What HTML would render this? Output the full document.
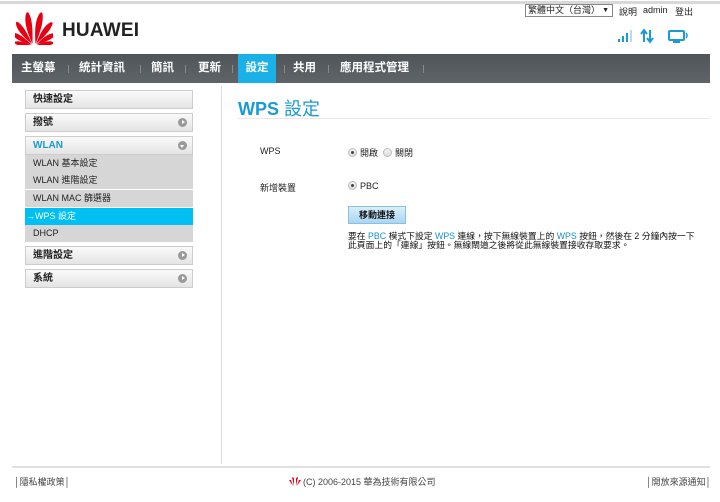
<!DOCTYPE html>
<html><head><meta charset="utf-8"><style>
*{margin:0;padding:0;box-sizing:border-box}
body{width:720px;height:502px;background:#fff;font-family:"Liberation Sans","Noto Sans CJK TC",sans-serif;position:relative;overflow:hidden;color:#333}
.topline{position:absolute;left:0;top:1px;width:720px;height:3px;background:#d8d8d8}
.logo{position:absolute;left:15px;top:11px}
.brand{position:absolute;left:62px;top:20px;font-size:19px;font-weight:bold;color:#222;letter-spacing:0.2px}
.lang{position:absolute;left:525px;top:4px;width:88px;height:13px;border:1px solid #888;font-size:9px;line-height:11px;padding-left:2px;color:#222;background:#fff}
.lang span{position:absolute;right:3px;top:0;font-size:7px}
.tl{position:absolute;top:5px;font-size:9px;color:#222}
.nav{position:absolute;left:12px;top:54px;width:698px;height:29px;background:linear-gradient(#4f5558,#5e6467);}
.nav a{position:absolute;top:0;height:29px;line-height:29px;color:#fff;font-size:11.5px;font-weight:bold}
.nav .sep{position:absolute;top:11px;width:1px;height:8px;background:#888}
.nav .act{background:#1ab0e8;width:38px;text-align:center}
.vdiv{position:absolute;left:221px;top:86px;width:1px;height:378px;background:#ddd}
.sb{position:absolute;left:25px;width:168px;height:19px;border:1px solid #ccc;background:linear-gradient(#fafafa,#e4e4e4);font-size:10px;font-weight:bold;line-height:17px;padding-left:7px;color:#222}
.sb i{position:absolute;right:5px;top:4px;width:9px;height:9px;border-radius:50%;background:#999}
.sb i:after{content:"";position:absolute;left:3.5px;top:2px;border-left:3px solid #fff;border-top:2.5px solid transparent;border-bottom:2.5px solid transparent}
.sb i.d:after{left:2px;top:3.5px;border-top:3px solid #fff;border-left:2.5px solid transparent;border-right:2.5px solid transparent;border-bottom:0}
.sub{position:absolute;left:25px;width:168px;height:17px;background:#d6d6d6;font-size:9px;line-height:17px;padding-left:8px;color:#222}
.title{position:absolute;left:238px;top:95px;font-size:18px;color:#1a9ad6;font-weight:bold}
.title span{font-weight:normal}
.hline{position:absolute;left:238px;top:118px;width:472px;height:1px;background:#e8e8e8}
.lbl{position:absolute;font-size:9px;color:#222}
.rad{display:inline-block;width:9px;height:9px;border:1px solid #bbb;border-radius:50%;background:linear-gradient(#f4f4f4,#ddd);vertical-align:-1px;position:relative;margin-right:3px}
.rad.on:after{content:"";position:absolute;left:2px;top:2px;width:3px;height:3px;border-radius:50%;background:#444}
.btn{position:absolute;left:348px;top:206px;width:58px;height:18px;border:1px solid #8bc0df;background:linear-gradient(#d8eefa,#a9d6f2);font-size:9px;font-weight:bold;text-align:center;line-height:16px;color:#111}
.desc{position:absolute;left:348px;top:232px;font-size:8.8px;line-height:9px;color:#111;white-space:nowrap}
.desc b{font-weight:normal;color:#1a8fd0}
.fline{position:absolute;left:12px;top:466px;width:698px;height:2px;background:#e0e0e0}
.ft{position:absolute;top:475px;font-size:9px;color:#444}
</style></head><body>
<div class="topline"></div>
<svg class="logo" width="38" height="34" viewBox="0 0 38 34">
<defs><path id="p" d="M0 0 C-2.5 -7 -4.5 -15 -1 -20 C0 -21 1 -21 1.5 -20 C4 -15 2 -7 0 0Z"/></defs>
<g fill="#e60012">
<use href="#p" transform="translate(17.5 33) rotate(-10) scale(1.1 1.55)"/>
<use href="#p" transform="translate(20.5 33) rotate(10) scale(1.1 1.55)"/>
<use href="#p" transform="translate(17 33) rotate(-36) scale(1 1.3)"/>
<use href="#p" transform="translate(21 33) rotate(36) scale(1 1.3)"/>
<use href="#p" transform="translate(16.5 33.5) rotate(-60) scale(0.9 1.05)"/>
<use href="#p" transform="translate(21.5 33.5) rotate(60) scale(0.9 1.05)"/>
<use href="#p" transform="translate(16 34) rotate(-82) scale(0.75 0.8)"/>
<use href="#p" transform="translate(22 34) rotate(82) scale(0.75 0.8)"/>
</g></svg>
<div class="brand">HUAWEI</div>
<div class="lang">繁體中文（台灣）<span>▼</span></div>
<div class="tl" style="left:619px">說明</div>
<div class="tl" style="left:643px">admin</div>
<div class="tl" style="left:675px">登出</div>
<svg style="position:absolute;left:618px;top:29px" width="75" height="15" viewBox="0 0 75 15">
<g fill="#1a9ad6"><rect x="0" y="10" width="2" height="3"/><rect x="4" y="7" width="2" height="6"/><rect x="8" y="4" width="2" height="9"/><rect x="12" y="1" width="2" height="12" fill="#b8d8ee"/></g>
<path d="M26 13V2 M23 5 L26 1 L29 5 M32 1V12 M29 9 L32 13 L35 9" stroke="#1a9ad6" stroke-width="2" fill="none"/>
<rect x="51" y="2" width="15" height="9" rx="1" fill="none" stroke="#1a9ad6" stroke-width="2"/>
<rect x="55" y="12" width="7" height="2" fill="#1a9ad6"/>
<path d="M68 4 Q70 6.5 68 9" stroke="#1a9ad6" stroke-width="1.5" fill="none"/>
</svg>
<div class="nav">
<a style="left:9px">主螢幕</a><div class="sep" style="left:56px"></div>
<a style="left:67px">統計資訊</a><div class="sep" style="left:128px"></div>
<a style="left:139px">簡訊</a><div class="sep" style="left:173px"></div>
<a style="left:186px">更新</a><div class="sep" style="left:220px"></div>
<a class="act" style="left:226px">設定</a><div class="sep" style="left:272px"></div>
<a style="left:281px">共用</a><div class="sep" style="left:316px"></div>
<a style="left:328px">應用程式管理</a><div class="sep" style="left:411px"></div>
</div>
<div class="vdiv"></div>
<div class="sb" style="top:90px">快速設定</div>
<div class="sb" style="top:113px">撥號<i></i></div>
<div class="sb" style="top:136px;color:#1a9ad6">WLAN<i class="d"></i></div>
<div class="sub" style="top:155px">WLAN 基本設定</div>
<div class="sub" style="top:172px">WLAN 進階設定</div>
<div class="sub" style="top:190px">WLAN MAC 篩選器</div>
<div class="sub" style="top:208px;background:#00bff3;color:#fff;padding-left:1px">→WPS 設定</div>
<div class="sub" style="top:225px;height:17px">DHCP</div>
<div class="sb" style="top:246px">進階設定<i></i></div>
<div class="sb" style="top:269px">系統<i></i></div>
<div class="title">WPS <span>設定</span></div>
<div class="hline"></div>
<div class="lbl" style="left:260px;top:146px">WPS</div>
<div class="lbl" style="left:348px;top:146px"><span class="rad on"></span>開啟 &nbsp;<span class="rad"></span>關閉</div>
<div class="lbl" style="left:260px;top:181px">新增裝置</div>
<div class="lbl" style="left:348px;top:181px"><span class="rad on"></span>PBC</div>
<div class="btn">移動連接</div>
<div class="desc">要在 <b>PBC</b> 模式下設定 <b>WPS</b> 連線，按下無線裝置上的 <b>WPS</b> 按鈕，然後在 2 分鐘內按一下<br>此頁面上的「連線」按鈕。無線閘道之後將從此無線裝置接收存取要求。</div>
<div class="fline"></div>
<div class="ft" style="left:14px">│隱私權政策│</div>
<svg style="position:absolute;left:289px;top:476px" width="12" height="10" viewBox="0 0 12 10"><g fill="#e60012"><path d="M5 10L3 1L5 2Z"/><path d="M7 10L9 1L7 2Z"/><path d="M4 10L0 4L2 4Z"/><path d="M8 10L12 4L10 4Z"/></g></svg>
<div class="ft" style="left:303px">(C) 2006-2015 華為技術有限公司</div>
<div class="ft" style="left:646px">│開放來源通知│</div>
</body></html>
